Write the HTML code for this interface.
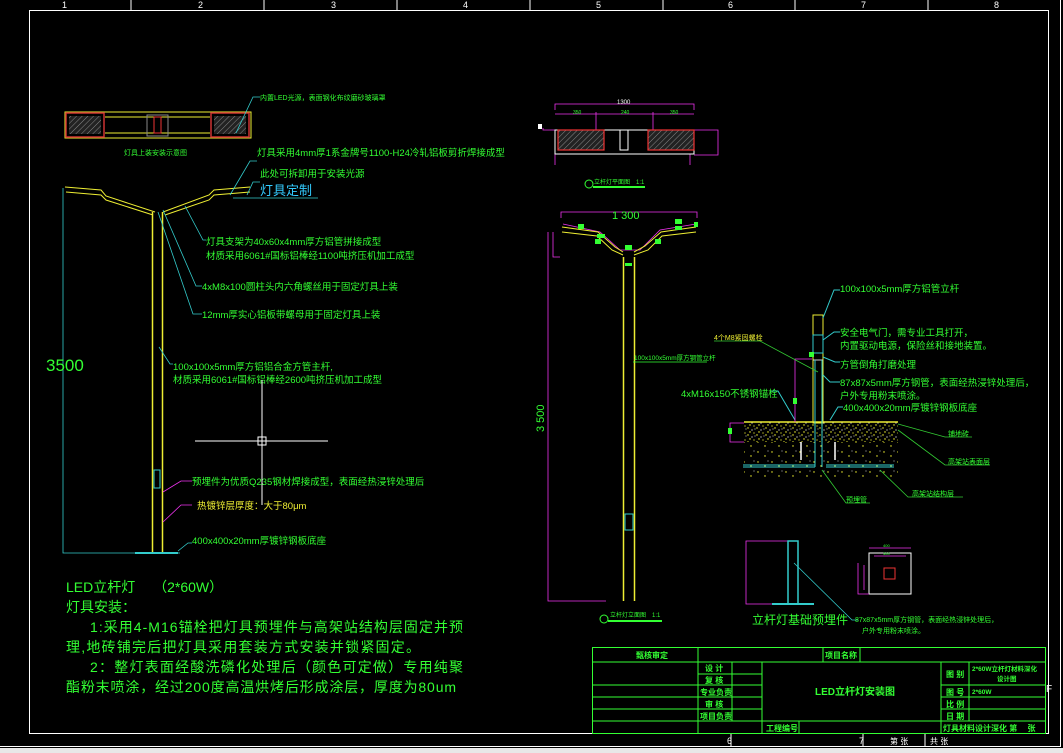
<!DOCTYPE html>
<html><head><meta charset="utf-8"><style>
html,body{margin:0;padding:0;background:#000;width:1063px;height:753px;overflow:hidden}
svg{display:block}
text{font-family:"Liberation Sans","Noto Sans CJK SC",sans-serif}
.g{fill:#33ff33}
.s{font-size:8px}
.m{font-size:9.5px}
.t{font-size:7px}
</style></head><body>
<svg width="1063" height="753" viewBox="0 0 1063 753" xmlns="http://www.w3.org/2000/svg">
<defs>
<pattern id="h" width="4" height="4" patternUnits="userSpaceOnUse" patternTransform="rotate(45)"><rect width="4" height="4" fill="#222"/><line x1="0" y1="0" x2="0" y2="4" stroke="#888" stroke-width="1"/></pattern>
<pattern id="d" width="9" height="7" patternUnits="userSpaceOnUse"><rect width="9" height="7" fill="#000"/><circle cx="1" cy="1" r=".7" fill="#ff3"/><circle cx="5" cy="3" r=".6" fill="#fff"/><circle cx="3" cy="5" r=".7" fill="#ff3"/><circle cx="7" cy="6" r=".6" fill="#ff3"/><circle cx="8" cy="2" r=".5" fill="#fff"/></pattern>
<pattern id="d2" width="14" height="10" patternUnits="userSpaceOnUse"><rect width="14" height="10" fill="#000"/><circle cx="2" cy="2" r=".7" fill="#ff3"/><circle cx="9" cy="6" r=".7" fill="#ff3"/><circle cx="12" cy="1" r=".5" fill="#fff"/></pattern>
</defs>
<!-- frame & ruler -->
<g stroke="#fff" stroke-width="1" fill="none">
<rect x="29.5" y="10.5" width="1019" height="723"/>
<line x1="1060.5" y1="0" x2="1060.5" y2="746"/>
<line x1="0" y1="746.5" x2="1061" y2="746.5"/>
<line x1="131" y1="0" x2="131" y2="10"/><line x1="264" y1="0" x2="264" y2="10"/><line x1="397" y1="0" x2="397" y2="10"/><line x1="530" y1="0" x2="530" y2="10"/><line x1="663" y1="0" x2="663" y2="10"/><line x1="795" y1="0" x2="795" y2="10"/><line x1="928" y1="0" x2="928" y2="10"/>
<line x1="731" y1="733" x2="731" y2="746"/><line x1="863" y1="733" x2="863" y2="746"/><line x1="925" y1="733" x2="925" y2="746"/>
</g>
<rect x="0" y="748" width="1063" height="5" fill="#e8e8e8"/>
<g fill="#fff" font-size="9">
<text x="62" y="8">1</text><text x="198" y="8">2</text><text x="331" y="8">3</text><text x="463" y="8">4</text><text x="596" y="8">5</text><text x="728" y="8">6</text><text x="861" y="8">7</text><text x="994" y="8">8</text>
<text x="727" y="744">6</text><text x="859" y="744">7</text><text x="890" y="744" font-size="8">第 张</text><text x="930" y="744" font-size="8">共 张</text>
<text x="1046" y="692" font-size="10">F</text>
</g>

<!-- LEFT: top plan -->
<rect x="65" y="112" width="186" height="26" fill="none" stroke="#ee3" stroke-width="1"/>
<rect x="66" y="113" width="38" height="24" fill="none" stroke="#c33" stroke-width="1.5"/>
<rect x="211" y="113" width="38" height="24" fill="none" stroke="#c33" stroke-width="1.5"/>
<rect x="69" y="116" width="32" height="18" fill="url(#h)"/>
<rect x="214" y="116" width="32" height="18" fill="url(#h)"/>
<line x1="105" y1="117" x2="210" y2="117" stroke="#ee3"/><line x1="105" y1="133" x2="210" y2="133" stroke="#ee3"/>
<rect x="147" y="115" width="21" height="21" fill="none" stroke="#888"/>
<rect x="154" y="117" width="7" height="16" fill="none" stroke="#e33"/>
<polyline points="236,133 253,97 260,97" fill="none" stroke="#3cc" stroke-width=".8"/>
<text x="260" y="100" class="g t">内置LED光源，表面钢化布纹磨砂玻璃罩</text>
<text x="124" y="155" class="g t">灯具上装安装示意图</text>

<!-- LEFT: elevation -->
<g stroke="#ee3" fill="none" stroke-width="1">
<polyline points="65,187 101,190 106,196 155,212"/><polyline points="66,192 101,195 106,200 153,215"/>
<polyline points="250,187 214,190 209,195 163,212"/><polyline points="250,192 214,195 209,200 165,215"/>
<line x1="152.5" y1="212" x2="152.5" y2="553" stroke-width="1.5"/><line x1="162.5" y1="212" x2="162.5" y2="553" stroke-width="1.5"/>
</g>
<rect x="154" y="470" width="6" height="18" fill="none" stroke="#3cc"/>
<g stroke="#3cc" fill="none" stroke-width=".8">
<polyline points="63,188 63,553 180,553"/><line x1="135" y1="553" x2="178" y2="553" stroke-width="2"/>
<polyline points="230,195 250,161 257,161"/><polyline points="247,195 253,182 260,182"/>
<line x1="233" y1="198" x2="318" y2="198"/>
<polyline points="185,206 203,240 206,240"/><polyline points="163,210 196,286 202,286"/><polyline points="158,212 193,314 202,314"/>
<polyline points="159,347 170,364 173,364"/><polyline points="178,551 188,543 192,543"/>
</g>
<g stroke="#e3e" fill="none" stroke-width=".8"><polyline points="163,492 181,481 192,481"/><polyline points="163,522 181,505 192,505"/></g>
<text x="46" y="371" class="g" font-size="17" fill="#33ff33">3500</text>
<text x="257" y="156" class="g m">灯具采用4mm厚1系金牌号1100-H24冷轧铝板剪折焊接成型</text>
<text x="260" y="177" class="g m">此处可拆卸用于安装光源</text>
<text x="260" y="195" font-size="13" fill="#3cf">灯具定制</text>
<text x="206" y="245" class="g m">灯具支架为40x60x4mm厚方铝管拼接成型</text>
<text x="206" y="259" class="g m">材质采用6061#国标铝棒经1100吨挤压机加工成型</text>
<text x="202" y="290" class="g m">4xM8x100圆柱头内六角螺丝用于固定灯具上装</text>
<text x="202" y="318" class="g m">12mm厚实心铝板带螺母用于固定灯具上装</text>
<text x="173" y="370" class="g m">100x100x5mm厚方铝铝合金方管主杆,</text>
<text x="173" y="383" class="g m">材质采用6061#国标铝棒经2600吨挤压机加工成型</text>
<text x="192" y="485" class="g m">预埋件为优质Q235钢材焊接成型，表面经热浸锌处理后</text>
<text x="197" y="509" class="m" fill="#ee3">热镀锌层厚度：大于80μm</text>
<text x="192" y="544" class="g m">400x400x20mm厚镀锌钢板底座</text>
<g stroke="#fff" stroke-width="1"><line x1="195" y1="441" x2="328" y2="441"/><line x1="262" y1="380" x2="262" y2="505"/></g>
<rect x="258" y="437" width="8" height="8" fill="none" stroke="#fff"/>

<!-- notes -->
<g class="g" font-size="14" fill="#33ff33">
<text x="66" y="592">LED立杆灯　 （2*60W）</text>
<text x="66" y="612">灯具安装：</text>
<text x="90" y="632" textLength="373">1:采用4-M16锚栓把灯具预埋件与高架站结构层固定并预</text>
<text x="66" y="652" textLength="354">理,地砖铺完后把灯具采用套装方式安装并锁紧固定。</text>
<text x="90" y="672" textLength="373">2：整灯表面经酸洗磷化处理后（颜色可定做）专用纯聚</text>
<text x="66" y="692" textLength="390">酯粉末喷涂，经过200度高温烘烤后形成涂层，厚度为80um</text>
</g>

<!-- RIGHT: top plan -->
<g stroke="#e3e" fill="none" stroke-width=".8">
<polyline points="555,110 555,104 694,104 694,110"/><line x1="555" y1="114" x2="694" y2="114"/>
<line x1="596" y1="112" x2="596" y2="130"/><line x1="653" y1="112" x2="653" y2="130"/>
<polyline points="543,128 543,130 718,130 718,155 694,155"/><line x1="555" y1="154" x2="555" y2="165"/><line x1="690" y1="154" x2="690" y2="165"/>
</g>
<rect x="555" y="130" width="139" height="24" fill="none" stroke="#fff"/>
<rect x="558" y="130" width="46" height="20" fill="url(#h)" stroke="#e33" stroke-width="1.2"/>
<rect x="654" y="130" width="46" height="20" fill="url(#h)" stroke="#e33" stroke-width="1.2" transform="translate(-6,0)"/>
<rect x="620" y="130" width="8" height="20" fill="none" stroke="#fff"/>
<rect x="538" y="124" width="4" height="5" fill="#fff"/>
<text x="617" y="104" fill="#fff" font-size="6">1300</text>
<text x="573" y="114" class="g" font-size="5">350</text><text x="621" y="114" class="g" font-size="5">240</text><text x="670" y="114" class="g" font-size="5">350</text>
<circle cx="589" cy="184" r="4" fill="none" stroke="#3f3"/><line x1="593" y1="187" x2="645" y2="187" stroke="#3f3" stroke-width="2"/>
<text x="594" y="184" class="g" font-size="6">立杆灯平面图　1:1</text>

<!-- RIGHT: elevation -->
<g stroke="#e3e" fill="none" stroke-width=".8">
<polyline points="561,218 561,212 697,212 697,218"/>
<polyline points="548,232 548,601 606,601"/>
<polyline points="553,232 553,257 560,257"/>
<polyline points="563,224 600,232 620,250 640,250 660,230 696,224"/>
</g>
<text x="612" y="219" fill="#3f3" font-size="11">1 300</text>
<g stroke="#ee3" fill="none" stroke-width="1">
<polyline points="562,227 598,232 615,247 623,252"/><polyline points="562,232 597,236 612,250 623,255"/>
<polyline points="696,227 661,232 645,246 634,252"/><polyline points="696,232 662,236 648,250 634,255"/>
<line x1="623.5" y1="257" x2="623.5" y2="601" stroke-width="1.5"/><line x1="634.5" y1="257" x2="634.5" y2="601" stroke-width="1.5"/>
</g>
<g fill="#3f3"><rect x="578" y="224" width="6" height="5"/><rect x="595" y="239" width="6" height="5"/><rect x="597" y="234" width="8" height="4"/><rect x="625" y="245" width="7" height="5"/><rect x="655" y="239" width="6" height="5"/><rect x="675" y="219" width="7" height="5"/><rect x="675" y="226" width="7" height="4"/><rect x="694" y="222" width="4" height="5"/><rect x="625" y="263" width="7" height="3"/></g>
<rect x="625" y="514" width="8" height="16" fill="none" stroke="#3cc"/>
<text x="544" y="432" fill="#3f3" font-size="11" transform="rotate(-90 544 432)" >3 500</text>
<line x1="633" y1="362" x2="707" y2="362" stroke="#3f3" stroke-width=".8"/>
<text x="634" y="360" class="g" font-size="6.5">100x100x5mm厚方钢管立杆</text>
<circle cx="604" cy="619" r="4" fill="none" stroke="#3f3"/><line x1="608" y1="621" x2="662" y2="621" stroke="#3f3" stroke-width="2"/>
<text x="610" y="617" class="g" font-size="6">立杆灯立面图　1:1</text>

<!-- RIGHT: section -->
<rect x="744" y="422" width="154" height="20" fill="url(#d)"/>
<rect x="744" y="442" width="154" height="35" fill="url(#d2)"/>
<line x1="744" y1="422" x2="898" y2="422" stroke="#ee3" stroke-width="1.5"/>
<rect x="813" y="315" width="10" height="108" fill="none" stroke="#ee3"/>
<line x1="813" y1="360" x2="823" y2="360" stroke="#fff" stroke-width=".8"/>
<g stroke="#3cc" fill="none" stroke-width="1">
<rect x="813" y="335" width="10" height="18"/>
<line x1="743" y1="465" x2="815" y2="465"/><line x1="826" y1="465" x2="894" y2="465"/><line x1="743" y1="467" x2="815" y2="467"/><line x1="826" y1="467" x2="894" y2="467"/>
<line x1="815" y1="360" x2="815" y2="467"/><line x1="822" y1="360" x2="822" y2="467"/>
<polyline points="823,318 834,290 840,290"/><polyline points="823,340 834,332 840,332"/><polyline points="823,357 835,362 840,362"/><polyline points="823,375 830,382 840,382"/><polyline points="830,420 838,407 843,407"/>
<polyline points="795,420 778,391 770,391"/>
</g>
<g stroke="#fff" stroke-width="1.5"><line x1="801" y1="442" x2="801" y2="460"/><line x1="835" y1="442" x2="835" y2="460"/></g>
<g stroke="#e3e" fill="none" stroke-width=".8">
<polyline points="812,359 795,359 795,422"/><polyline points="744,423 730,423 730,442 744,442"/>
</g>
<rect x="793" y="398" width="4" height="6" fill="#3f3"/><rect x="728" y="428" width="4" height="6" fill="#3f3"/><rect x="809" y="352" width="5" height="5" fill="#3f3"/>
<g stroke="#3c3" fill="none" stroke-width=".8">
<polyline points="714,341 760,341 818,372"/><polyline points="898,424 945,437 972,437"/><polyline points="898,430 945,465 990,465"/><polyline points="880,470 908,497 963,497"/><polyline points="822,470 846,503 870,503"/>
</g>
<text x="840" y="292" class="g m">100x100x5mm厚方铝管立杆</text>
<text x="840" y="336" class="g m">安全电气门，需专业工具打开，</text>
<text x="840" y="349" class="g m">内置驱动电源，保险丝和接地装置。</text>
<text x="840" y="368" class="g m">方管倒角打磨处理</text>
<text x="840" y="386" class="g m">87x87x5mm厚方钢管，表面经热浸锌处理后，</text>
<text x="840" y="399" class="g m">户外专用粉末喷涂。</text>
<text x="843" y="411" class="g m">400x400x20mm厚镀锌钢板底座</text>
<text x="681" y="397" class="g m">4xM16x150不锈钢锚栓</text>
<text x="714" y="340" class="t" fill="#ee3">4个M8紧固螺栓</text>
<text x="948" y="436" class="g t">铺地砖</text>
<text x="948" y="464" class="g t">高架站表面层</text>
<text x="912" y="496" class="g t">高架站结构层</text>
<text x="846" y="502" class="g t">预埋管</text>

<!-- foundation piece -->
<polyline points="788,541 746,541 746,604 772,604" fill="none" stroke="#e3e" stroke-width=".8"/>
<rect x="788" y="541" width="10" height="63" fill="none" stroke="#3cc" stroke-width="1.5"/>
<line x1="772" y1="604" x2="814" y2="604" stroke="#3cc" stroke-width="2"/>
<polyline points="794,563 852,620 858,620" fill="none" stroke="#3cc" stroke-width=".8"/>
<text x="752" y="624" class="g" font-size="12">立杆灯基础预埋件</text>
<text x="855" y="622" class="g t">87x87x5mm厚方钢管，表面经热浸锌处理后，</text>
<text x="862" y="633" class="g t">户外专用粉末喷涂。</text>
<!-- small plan -->
<rect x="869" y="553" width="42" height="41" fill="none" stroke="#fff"/>
<rect x="884" y="568" width="11" height="11" fill="none" stroke="#e33"/>
<g stroke="#e3e" fill="none" stroke-width=".8"><polyline points="869,548 911,548"/><polyline points="874,556 906,556"/><polyline points="858,563 858,594 869,594"/><polyline points="864,565 864,590"/></g>
<text x="883" y="547" class="g" font-size="4">400</text><text x="883" y="555" class="g" font-size="4">300</text>

<!-- title block -->
<g stroke="#3f3" fill="none" stroke-width="1">
<rect x="592.5" y="647.5" width="453" height="86"/>
<line x1="592" y1="662" x2="1045" y2="662"/>
<line x1="698" y1="647" x2="698" y2="733"/><line x1="732" y1="662" x2="732" y2="721"/><line x1="762" y1="662" x2="762" y2="733"/>
<line x1="941" y1="662" x2="941" y2="733"/><line x1="969" y1="662" x2="969" y2="721"/>
<line x1="823" y1="647" x2="823" y2="662"/><line x1="860" y1="647" x2="860" y2="662"/>
<line x1="592" y1="685" x2="762" y2="685"/><line x1="592" y1="697" x2="762" y2="697"/><line x1="592" y1="709" x2="762" y2="709"/><line x1="592" y1="721" x2="1045" y2="721"/>
<line x1="698" y1="674" x2="762" y2="674"/>
<line x1="941" y1="685" x2="1045" y2="685"/><line x1="941" y1="697" x2="1045" y2="697"/><line x1="941" y1="709" x2="1045" y2="709"/>
<line x1="799" y1="721" x2="799" y2="733"/>
</g>
<g class="g" font-size="8" fill="#33ff33" font-weight="bold">
<text x="636" y="658">甄核审定</text><text x="825" y="658">项目名称</text>
<text x="705" y="671">设 计</text><text x="705" y="683">复 核</text><text x="700" y="695">专业负责</text><text x="705" y="707">审 核</text><text x="700" y="719">项目负责</text>
<text x="815" y="695" font-size="10">LED立杆灯安装图</text>
<text x="766" y="731">工程编号</text>
<text x="946" y="677">图 别</text><text x="946" y="695">图 号</text><text x="946" y="707">比 例</text><text x="946" y="719">日 期</text>
<text x="972" y="671" font-size="6.5">2*60W立杆灯材料深化</text><text x="997" y="681" font-size="6.5">设计图</text>
<text x="972" y="694" font-size="6.5">2*60W</text>
<text x="943" y="731">灯具材料设计深化 第　 张</text>
</g>
</svg>
</body></html>
